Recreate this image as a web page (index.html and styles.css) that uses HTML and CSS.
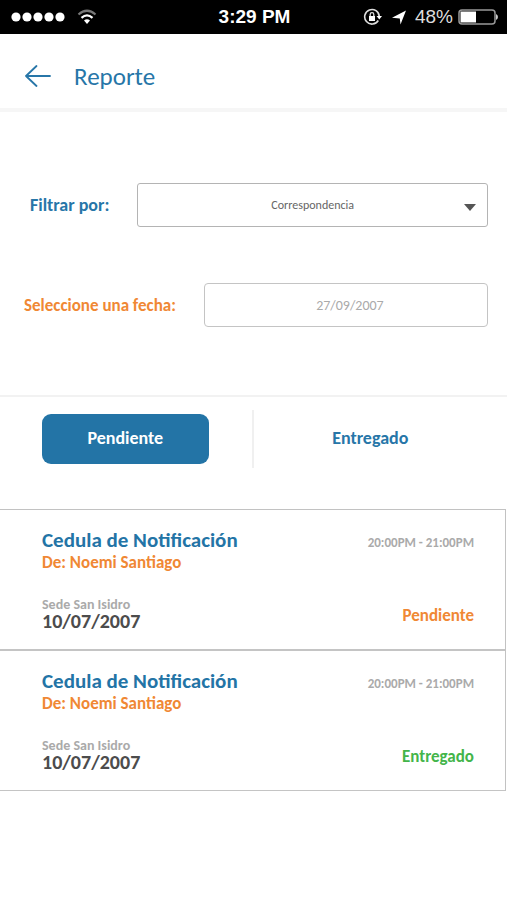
FILE: index.html
```html
<!DOCTYPE html>
<html lang="es">
<head>
<meta charset="utf-8">
<meta name="viewport" content="width=device-width, initial-scale=1">
<title>Reporte</title>
<link rel="stylesheet" href="styles.css">
</head>
<body>
<div class="status-bar">
  <div class="status-left">
    <svg width="54" height="12" viewBox="0 0 54 12" fill="#fff" aria-hidden="true"><circle cx="5" cy="6" r="4.6"/><circle cx="16" cy="6" r="4.6"/><circle cx="27" cy="6" r="4.6"/><circle cx="38" cy="6" r="4.6"/><circle cx="49" cy="6" r="4.6"/></svg>
    <svg width="20" height="16" viewBox="0 0 20 16" fill="none" stroke-width="2.2" aria-hidden="true"><path d="M1.5 5.5Q10-2 18.500 5.500" stroke="#777"/><path d="M4.500 8.800Q10 4 15.500 8.800" stroke="#fff"/><path d="M7 11.500Q10 9 13 11.500L10 15Z" fill="#fff"/></svg>
  </div>
  <strong class="clock">3:29 PM</strong>
  <div class="status-right">
    <svg width="20" height="18" viewBox="0 0 20 18" fill="none" stroke="#ddd" stroke-width="1.6" aria-hidden="true"><path d="M15.300 12.500A7.300 7.300 0 1 1 16.300 8.500"/><path d="M13.500 8h5.500l-2.700 3.500z" fill="#fff" stroke="none"/><path d="M6 8h6v5H6z" fill="#fff" stroke="none"/><path d="M7.200 8V6.500a1.800 1.800 0 0 1 3.600 0V8" stroke-width="1.300"/></svg>
    <svg width="14" height="15" viewBox="0 0 14 15" fill="#fff" aria-hidden="true"><path d="M14 0.500 8.500 14.500 7.800 8.500 0 7.800Z"/></svg>
    <div class="battery">
      <span class="percent">48%</span>
      <svg width="40" height="16" viewBox="0 0 40 16" fill="none" aria-hidden="true"><rect x="1" y="1" width="36" height="14" rx="3" stroke="#999" stroke-width="1.500"/><path d="M2.500 2.500H18v11H2.500z" fill="#fff"/><path d="M38 5q2 1 2 3t-2 3z" fill="#ccc"/></svg>
    </div>
  </div>
</div>

<header class="header">
  <button class="back" type="button" aria-label="Volver">
    <svg width="26" height="22" viewBox="0 0 26 22" fill="none" stroke="#2776a8" stroke-width="1.800" stroke-linecap="round" stroke-linejoin="round" aria-hidden="true"><path d="M25 11H1M11.500 1 1 11l10.500 10"/></svg>
  </button>
  <h1 class="title">Reporte</h1>
</header>

<main>
  <form class="filters">
    <div class="field">
      <label class="label" for="tipo">Filtrar por:</label>
      <div class="select-box">
        <select class="control" id="tipo"><option>Correspondencia</option></select>
        <svg class="caret" width="12" height="7" viewBox="0 0 12 7" fill="#555" aria-hidden="true"><path d="M0 0h12L6 7z"/></svg>
      </div>
    </div>
    <div class="field field-date">
      <label class="label label-date" for="fecha">Seleccione una fecha:</label>
      <input class="control control-date" id="fecha" type="text" value="27/09/2007">
    </div>
  </form>

  <div class="tabs">
    <div class="tab"><button class="tab-button active" type="button">Pendiente</button></div>
    <div class="tab"><button class="tab-button" type="button">Entregado</button></div>
  </div>

  <section class="list">
    <article class="card">
      <div class="row">
        <h2 class="name">Cedula de Notificación</h2>
        <span class="time">20:00PM - 21:00PM</span>
      </div>
      <p class="from">De: Noemi Santiago</p>
      <div class="row details">
        <div>
          <p class="place">Sede San Isidro</p>
          <p class="date">10/07/2007</p>
        </div>
        <span class="state pending">Pendiente</span>
      </div>
    </article>
    <article class="card">
      <div class="row">
        <h2 class="name">Cedula de Notificación</h2>
        <span class="time">20:00PM - 21:00PM</span>
      </div>
      <p class="from">De: Noemi Santiago</p>
      <div class="row details">
        <div>
          <p class="place">Sede San Isidro</p>
          <p class="date">10/07/2007</p>
        </div>
        <span class="state delivered">Entregado</span>
      </div>
    </article>
  </section>
</main>
</body>
</html>
```
FILE: styles.css
```css
* { box-sizing: border-box; }

body {
  margin: 0;
  background: #fff;
  color: #4c4c4c;
  font-family: Carlito, "Noto Sans", sans-serif;
}

h1, h2, p { margin: 0; }

button, input, select { font-family: inherit; }

svg { display: block; flex: none; }

.status-bar {
  display: grid;
  grid-template-columns: 1fr auto 1fr;
  align-items: center;
  height: 34px;
  padding: 0 9px 0 11px;
  background: #000;
  color: #fff;
  font-family: "Liberation Sans", sans-serif;
}

.status-left { display: flex; align-items: center; gap: 12px; }
.status-right { display: flex; align-items: center; justify-content: flex-end; gap: 9px; }
.battery { display: flex; align-items: center; gap: 5px; }
.clock { font-size: 19px; }
.percent { font-size: 19px; color: #ddd; }

.header {
  display: flex;
  align-items: center;
  gap: 23px;
  height: 78px;
  padding: 9px 25px 0;
  border-bottom: 4px solid #f6f6f6;
}

.back { padding: 0; border: 0; background: none; }
.title { padding-top: 2px; font-size: 25px; font-weight: 400; line-height: 28px; color: #2776a8; }

.filters {
  display: flex;
  flex-direction: column;
  gap: 56px;
  padding: 71px 19px 68px 30px;
}

.field { display: flex; align-items: center; gap: 28px; }
.field-date { margin-left: -6px; }
.label { font-size: 18px; font-weight: 700; color: #2776a8; white-space: nowrap; }
.label-date { font-size: 17px; color: #f08834; }
.select-box { position: relative; flex: 1; }

.control {
  display: block;
  flex: 1;
  width: 100%;
  min-width: 0;
  height: 44px;
  padding: 0;
  border: 1px solid #b4b4b4;
  border-radius: 3px;
  background: #fff;
  color: #666;
  font-size: 12px;
  text-align: center;
  text-align-last: center;
  appearance: none;
}

.control-date { padding-left: 8px; border-color: #c4c4c4; border-radius: 4px; color: #aaa; font-size: 14px; }
.caret { position: absolute; right: 12px; top: 21px; pointer-events: none; }

.tabs {
  display: grid;
  grid-template-columns: 1fr 1fr;
  padding: 13px 0 41px;
  border-top: 2px solid #f2f2f2;
}

.tab { display: flex; align-items: center; justify-content: center; height: 58px; padding: 0 62px 0 42px; }
.tab:first-child { padding-right: 43px; border-right: 2px solid #f0f0f0; }

.tab-button {
  width: 100%;
  height: 50px;
  padding: 0 0 2px;
  border: 0;
  border-radius: 9px;
  background: none;
  color: #2776a8;
  font-size: 18px;
  font-weight: 700;
}

.tab-button.active { background: #2374a6; color: #fff; }

.list { margin-right: 1px; border: 1px solid #c2c2c2; border-width: 1px 1px 0 0; }
.card { padding: 18px 31px 18px 42px; border-bottom: 2px solid #c4c4c4; }
.card:last-child { border-bottom-width: 1px; }
.row { display: flex; align-items: center; justify-content: space-between; }
.name { font-size: 21px; font-weight: 700; line-height: 25px; color: #2374a6; }
.time { padding-top: 4px; font-size: 13px; font-weight: 700; color: #aaa; }
.from { font-size: 17px; font-weight: 700; line-height: 20px; color: #f08834; }
.details { margin-top: 24px; }
.place { font-size: 14px; font-weight: 700; line-height: 15px; color: #aaa; }
.date { font-size: 20px; font-weight: 700; line-height: 19px; }
.state { padding-top: 4px; font-size: 17px; font-weight: 700; line-height: 16px; }
.pending { color: #f08834; }
.delivered { color: #43b54a; }
```
